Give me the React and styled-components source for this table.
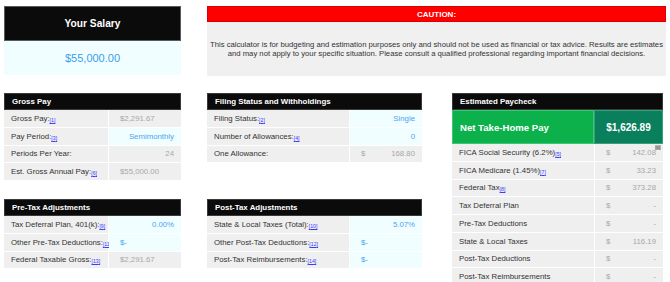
import React from 'react'
import styled, { createGlobalStyle } from 'styled-components'

const GlobalStyle = createGlobalStyle`
  html, body {
    margin: 0;
    padding: 0;
    background: #ffffff;
    overflow: hidden;
    font-family: "Liberation Sans", Arial, sans-serif;
  }
`

const grossPay = [
  { label: 'Gross Pay:', note: 1, value: '$2,291.67', kind: 'calc', align: 'left' },
  { label: 'Pay Period:', note: 3, value: 'Semimonthly', kind: 'input', align: 'right' },
  { label: 'Periods Per Year:', value: '24', kind: 'calc', align: 'right' },
  { label: 'Est. Gross Annual Pay:', note: 6, value: '$55,000.00', kind: 'calc', align: 'left' },
]

const filing = [
  { label: 'Filing Status:', note: 2, value: 'Single', kind: 'input', align: 'right' },
  { label: 'Number of Allowances:', note: 4, value: '0', kind: 'input', align: 'right' },
  { label: 'One Allowance:', value: '168.80', kind: 'calc', dollar: true },
]

const preTax = [
  { label: 'Tax Deferral Plan, 401(k):', note: 9, value: '0.00%', kind: 'input', align: 'right' },
  { label: 'Other Pre-Tax Deductions:', note: 11, value: '$-', kind: 'input', align: 'left' },
  { label: 'Federal Taxable Gross:', note: 13, value: '$2,291.67', kind: 'calc', align: 'left' },
]

const postTax = [
  { label: 'State & Local Taxes (Total):', note: 10, value: '5.07%', kind: 'input', align: 'right' },
  { label: 'Other Post-Tax Deductions:', note: 12, value: '$-', kind: 'input', align: 'left' },
  { label: 'Post-Tax Reimbursements:', note: 14, value: '$-', kind: 'input', align: 'left' },
]

const paycheck = [
  { label: 'FICA Social Security (6.2%)', note: 5, value: '142.08', dollar: true, kind: 'calc', flag: true },
  { label: 'FICA Medicare (1.45%)', note: 7, value: '33.23', dollar: true, kind: 'calc' },
  { label: 'Federal Tax', note: 8, value: '373.28', dollar: true, kind: 'calc' },
  { label: 'Tax Deferral Plan', value: '-', dollar: true, kind: 'calc' },
  { label: 'Pre-Tax Deductions', value: '-', dollar: true, kind: 'calc' },
  { label: 'State & Local Taxes', value: '116.19', dollar: true, kind: 'calc' },
  { label: 'Post-Tax Deductions', value: '-', dollar: true, kind: 'calc' },
  { label: 'Post-Tax Reimbursements', value: '-', dollar: true, kind: 'calc' },
]

function Rows({ rows, labelWidth }) {
  return (
    <Table $label={labelWidth}>
      {rows.map(row => (
        <React.Fragment key={row.label}>
          <LabelCell>
            {row.label}
            {row.note && <Note>[{row.note}]</Note>}
          </LabelCell>
          <ValueCell $kind={row.kind} $align={row.align} $split={row.dollar}>
            {row.dollar && <span>$</span>}
            <span>{row.value}</span>
            {row.flag && <Flag>[6]</Flag>}
          </ValueCell>
        </React.Fragment>
      ))}
    </Table>
  )
}

function App() {
  return (
    <Page>
      <GlobalStyle />
      <TopRow>
        <SalaryBox>
          <SalaryTitle>Your Salary</SalaryTitle>
          <SalaryValue>$55,000.00</SalaryValue>
        </SalaryBox>
        <Caution>
          <CautionTitle>CAUTION:</CautionTitle>
          <CautionText>
            This calculator is for budgeting and estimation purposes only and should not be used as financial or tax advice. Results are estimates
            <br />
            and may not apply to your specific situation. Please consult a qualified professional regarding important financial decisions.
          </CautionText>
        </Caution>
      </TopRow>

      <Main>
        <Panel>
          <PanelHeader>Gross Pay</PanelHeader>
          <Rows rows={grossPay} labelWidth={104} />
        </Panel>
        <Panel>
          <PanelHeader>Filing Status and Withholdings</PanelHeader>
          <Rows rows={filing} labelWidth={142} />
        </Panel>
        <Paycheck>
          <PanelHeader>Estimated Paycheck</PanelHeader>
          <NetRow>
            <NetLabel>Net Take-Home Pay</NetLabel>
            <NetValue>$1,626.89</NetValue>
          </NetRow>
          <Rows rows={paycheck} labelWidth={142} />
        </Paycheck>
        <Panel>
          <PanelHeader>Pre-Tax Adjustments</PanelHeader>
          <Rows rows={preTax} labelWidth={104} />
        </Panel>
        <Panel>
          <PanelHeader>Post-Tax Adjustments</PanelHeader>
          <Rows rows={postTax} labelWidth={142} />
        </Panel>
      </Main>
    </Page>
  )
}

const Page = styled.div`
  padding: 6px 0 0 4px;
  width: 670px;
  box-sizing: border-box;
`

const TopRow = styled.div`
  display: flex;
  gap: 26px;
  align-items: flex-start;
`

const SalaryBox = styled.div`
  width: 177px;
  flex-shrink: 0;
`

const SalaryTitle = styled.div`
  height: 35px;
  box-sizing: border-box;
  border: 1px solid #5a5a5a;
  background: #0b0b0b;
  color: #ffffff;
  font-weight: bold;
  font-size: 10.2px;
  display: flex;
  align-items: center;
  justify-content: center;
`

const SalaryValue = styled.div`
  height: 34px;
  background: #f1feff;
  color: #3a9ee8;
  font-size: 11px;
  display: flex;
  align-items: center;
  justify-content: center;
`

const Caution = styled.div`
  width: 459px;
`

const CautionTitle = styled.div`
  height: 16px;
  box-sizing: border-box;
  border: 1px solid #d80000;
  background: #ff0000;
  color: #ffffff;
  font-weight: bold;
  font-size: 8px;
  display: flex;
  align-items: center;
  justify-content: center;
`

const CautionText = styled.div`
  height: 54px;
  background: #f0f0f0;
  color: #333333;
  font-size: 7.7px;
  line-height: 9.5px;
  white-space: nowrap;
  display: flex;
  align-items: center;
  justify-content: center;
  text-align: center;
`

const Main = styled.div`
  margin-top: 17px;
  display: grid;
  grid-template-columns: 177px 215px 215px;
  grid-template-rows: 88px auto;
  column-gap: 26px;
  row-gap: 18px;
  align-items: start;
`

const Panel = styled.div`
  display: flex;
  flex-direction: column;
`

const Paycheck = styled(Panel)`
  grid-column: 3;
  grid-row: 1 / span 2;
  margin-left: 4px;
`

const PanelHeader = styled.div`
  height: 17px;
  box-sizing: border-box;
  border: 1px solid #3a3a3a;
  background: #0b0b0b;
  color: #ffffff;
  font-weight: bold;
  font-size: 7.9px;
  padding-left: 7px;
  display: flex;
  align-items: center;
`

const NetRow = styled.div`
  display: grid;
  grid-template-columns: 142px 1fr;
  height: 34px;
`

const NetLabel = styled.div`
  background: #0db14b;
  border: 1px solid #3cc574;
  color: #ffffff;
  font-weight: bold;
  font-size: 9.6px;
  padding-left: 7px;
  display: flex;
  align-items: center;
`

const NetValue = styled.div`
  background: #0a7f5b;
  border: 1px solid #3aa07b;
  color: #ffffff;
  font-weight: bold;
  font-size: 10px;
  display: flex;
  align-items: center;
  justify-content: center;
`

const Table = styled.div`
  display: grid;
  grid-template-columns: ${p => p.$label}px 1fr;
  grid-auto-rows: 16.75px;
  gap: 1px;
  background: #ffffff;
`

const LabelCell = styled.div`
  background: #efefef;
  color: #333333;
  font-size: 7.8px;
  padding-left: 7px;
  display: flex;
  align-items: center;
  white-space: nowrap;
`

const Note = styled.span`
  font-size: 5.2px;
  color: #3a3aff;
  text-decoration: underline;
  margin-top: 3px;
`

const ValueCell = styled.div`
  position: relative;
  background: ${p => (p.$kind === 'input' ? '#f1feff' : '#efefef')};
  color: ${p => (p.$kind === 'input' ? '#4aa4f0' : '#a8a8a8')};
  font-size: 7.8px;
  padding: 0 7px 0 11px;
  display: flex;
  align-items: center;
  justify-content: ${p => (p.$split ? 'space-between' : p.$align === 'right' ? 'flex-end' : 'flex-start')};
`

const Flag = styled.span`
  position: absolute;
  top: 1px;
  right: 2px;
  font-size: 4px;
  line-height: 5px;
  padding: 0 1px;
  background: #b8b8b8;
  color: #555555;
`

export default App
